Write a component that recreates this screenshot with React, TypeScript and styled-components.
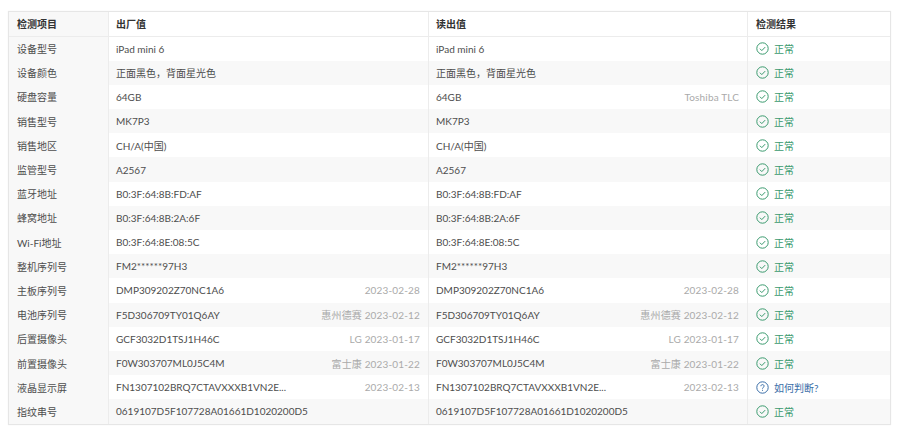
import React from 'react';
import styled, { createGlobalStyle } from 'styled-components';

const GlobalStyle = createGlobalStyle`
	html, body {
		margin: 0;
		padding: 0;
		background: #fff;
	}
`;

type Item = {
	name: string;
	factory: string;
	factoryNote?: string;
	read: string;
	readNote?: string;
	unknown?: boolean;
};

const items: Item[] = [
	{ name: '设备型号', factory: 'iPad mini 6', read: 'iPad mini 6' },
	{ name: '设备颜色', factory: '正面黑色，背面星光色', read: '正面黑色，背面星光色' },
	{ name: '硬盘容量', factory: '64GB', read: '64GB', readNote: 'Toshiba TLC' },
	{ name: '销售型号', factory: 'MK7P3', read: 'MK7P3' },
	{ name: '销售地区', factory: 'CH/A(中国)', read: 'CH/A(中国)' },
	{ name: '监管型号', factory: 'A2567', read: 'A2567' },
	{ name: '蓝牙地址', factory: 'B0:3F:64:8B:FD:AF', read: 'B0:3F:64:8B:FD:AF' },
	{ name: '蜂窝地址', factory: 'B0:3F:64:8B:2A:6F', read: 'B0:3F:64:8B:2A:6F' },
	{ name: 'Wi-Fi地址', factory: 'B0:3F:64:8E:08:5C', read: 'B0:3F:64:8E:08:5C' },
	{ name: '整机序列号', factory: 'FM2******97H3', read: 'FM2******97H3' },
	{ name: '主板序列号', factory: 'DMP309202Z70NC1A6', factoryNote: '2023-02-28', read: 'DMP309202Z70NC1A6', readNote: '2023-02-28' },
	{ name: '电池序列号', factory: 'F5D306709TY01Q6AY', factoryNote: '惠州德赛 2023-02-12', read: 'F5D306709TY01Q6AY', readNote: '惠州德赛 2023-02-12' },
	{ name: '后置摄像头', factory: 'GCF3032D1TSJ1H46C', factoryNote: 'LG 2023-01-17', read: 'GCF3032D1TSJ1H46C', readNote: 'LG 2023-01-17' },
	{ name: '前置摄像头', factory: 'F0W303707ML0J5C4M', factoryNote: '富士康 2023-01-22', read: 'F0W303707ML0J5C4M', readNote: '富士康 2023-01-22' },
	{ name: '液晶显示屏', factory: 'FN1307102BRQ7CTAVXXXB1VN2E...', factoryNote: '2023-02-13', read: 'FN1307102BRQ7CTAVXXXB1VN2E...', readNote: '2023-02-13', unknown: true },
	{ name: '指纹串号', factory: '0619107D5F107728A01661D1020200D5', read: '0619107D5F107728A01661D1020200D5' },
];

const OkIcon = () => (
	<svg width="13" height="13" viewBox="0 0 13 13" fill="none" stroke="currentColor" strokeWidth="1">
		<circle cx="6.5" cy="6.5" r="5.7" />
		<path d="M3.9 6.7l1.9 1.9 3.4-3.5" />
	</svg>
);

const HelpIcon = () => (
	<svg width="13" height="13" viewBox="0 0 13 13" fill="none" stroke="currentColor" strokeWidth="1">
		<circle cx="6.5" cy="6.5" r="5.7" />
		<path d="M4.9 5.2c0-1 .7-1.6 1.6-1.6s1.6.6 1.6 1.5c0 1.2-1.6 1.3-1.6 2.6" />
		<path d="M6.5 8.8v1" />
	</svg>
);

export default function App() {
	return (
		<Page>
			<GlobalStyle />
			<Table>
				<HeaderRow>
					<NameCell>检测项目</NameCell>
					<ValueCell>出厂值</ValueCell>
					<ValueCell>读出值</ValueCell>
					<ResultCell>检测结果</ResultCell>
				</HeaderRow>
				{items.map((item) => (
					<Row key={item.name}>
						<NameCell>{item.name}</NameCell>
						<ValueCell>
							<span>{item.factory}</span>
							{item.factoryNote && <Note>{item.factoryNote}</Note>}
						</ValueCell>
						<ValueCell>
							<span>{item.read}</span>
							{item.readNote && <Note>{item.readNote}</Note>}
						</ValueCell>
						<ResultCell>
							{item.unknown ? (
								<Status $color="#3a6ea8">
									<HelpIcon />
									如何判断?
								</Status>
							) : (
								<Status $color="#3a9a6e">
									<OkIcon />
									正常
								</Status>
							)}
						</ResultCell>
					</Row>
				))}
			</Table>
		</Page>
	);
}

const Page = styled.div`
	width: 900px;
	height: 430px;
	box-sizing: border-box;
	padding: 11px 9px 0 8px;
	font-family: 'Lato', 'Noto Sans CJK SC', sans-serif;
	font-size: 10px;
	color: #4d4d4d;
`;

const Table = styled.div`
	border: 1px solid #e6e6e6;
	box-shadow: 0 0 1px rgba(0, 0, 0, 0.08);
`;

const Row = styled.div`
	display: grid;
	grid-template-columns: 100px 320px 319px 1fr;
	height: 24.2px;
	align-items: stretch;

	&:nth-child(odd) {
		background: #f8f8f8;
	}
`;

const HeaderRow = styled(Row)`
	height: 24.5px;
	background: #fff;
	font-weight: 700;
	color: #333;
	border-bottom: 1px solid #ececec;
	box-sizing: border-box;

	&:nth-child(odd) {
		background: #fff;
	}
`;

const Cell = styled.div`
	display: flex;
	align-items: center;
	min-width: 0;
	white-space: nowrap;
`;

const NameCell = styled(Cell)`
	padding-left: 8px;
	background: #f8f8f8;
	border-right: 1px solid #ececec;
`;

const ValueCell = styled(Cell)`
	justify-content: space-between;
	padding: 0 8px 0 7px;
	border-right: 1px solid #ececec;
`;

const ResultCell = styled(Cell)`
	padding-left: 8px;
`;

const Note = styled.span`
	color: #aaa;
	letter-spacing: 0.15px;
`;

const Status = styled.span<{ $color: string }>`
	display: flex;
	align-items: center;
	gap: 5px;
	color: ${(p) => p.$color};
`;
